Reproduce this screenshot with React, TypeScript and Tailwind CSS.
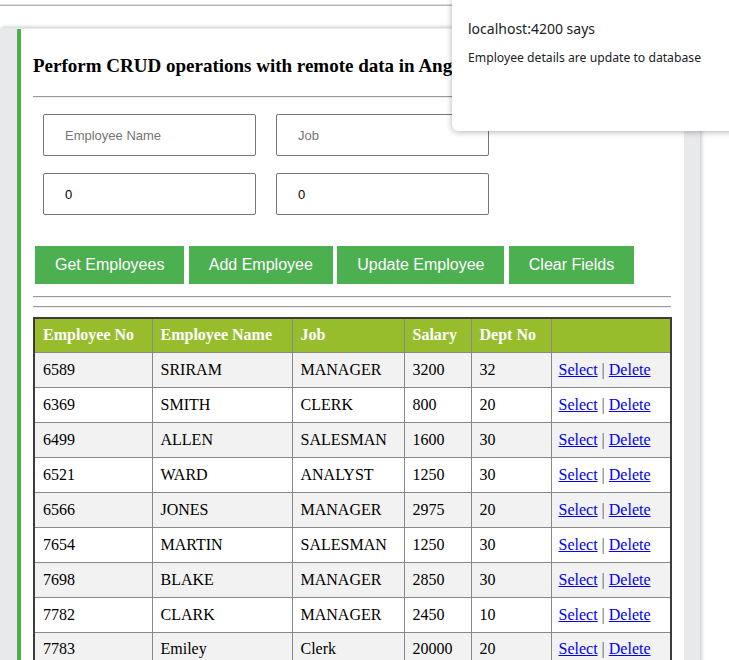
import React from 'react';

const ROWS: string[][] = [
  ['6589', 'SRIRAM', 'MANAGER', '3200', '32'],
  ['6369', 'SMITH', 'CLERK', '800', '20'],
  ['6499', 'ALLEN', 'SALESMAN', '1600', '30'],
  ['6521', 'WARD', 'ANALYST', '1250', '30'],
  ['6566', 'JONES', 'MANAGER', '2975', '20'],
  ['7654', 'MARTIN', 'SALESMAN', '1250', '30'],
  ['7698', 'BLAKE', 'MANAGER', '2850', '30'],
  ['7782', 'CLARK', 'MANAGER', '2450', '10'],
  ['7783', 'Emiley', 'Clerk', '20000', '20'],
];

const HEADERS = ['Employee No', 'Employee Name', 'Job', 'Salary', 'Dept No', ''];
const WIDTHS = ['w-[118px]', 'w-[140px]', 'w-[112px]', 'w-[67px]', 'w-[80px]', 'w-[120px]'];
const BUTTONS = ['Get Employees', 'Add Employee', 'Update Employee', 'Clear Fields'];

function Hr() {
  return <div className="h-[2px] border-t border-[#9a9a9a] border-b border-b-[#eeeeee]" />;
}

export default function App() {
  return (
    <div className="relative min-h-screen bg-white overflow-hidden font-['Liberation_Serif',serif]">
      <div className="h-[4px]" />
      <div className="h-[2px] border-t border-[#dcdcdc] border-b border-b-[#b8b8b8]" />

      {/* Card */}
      <div className="mt-[22px] w-[700px] bg-[#e8e9eb] rounded-tl-[4px] pt-[1px] pl-[17px] pr-[16px] shadow-[0_-1px_4px_rgba(0,0,0,0.15),2px_0_4px_rgba(0,0,0,0.12)]">
        <div className="bg-white border-l-4 border-[#4caf50] pl-[12px] pr-[13px] pt-[26px] pb-8">
          <h3 className="text-[19px] leading-[22px] font-bold text-black whitespace-nowrap">
            Perform CRUD operations with remote data in Angular
          </h3>
          <div className="mt-[19px]"><Hr /></div>

          {/* Form */}
          <div className="mt-[16px] pl-[10px] grid grid-cols-[213px_213px] gap-x-[20px] gap-y-[17px] font-['Liberation_Sans',Arial,sans-serif] text-[13px]">
            <input className="h-[42px] border border-[#767676] rounded-[2px] pl-[21px] outline-none placeholder:text-[#757575]" placeholder="Employee Name" />
            <input className="h-[42px] border border-[#767676] rounded-[2px] pl-[21px] outline-none placeholder:text-[#757575]" placeholder="Job" />
            <input className="h-[42px] border border-[#767676] rounded-[2px] pl-[21px] outline-none text-black" defaultValue="0" />
            <input className="h-[42px] border border-[#767676] rounded-[2px] pl-[21px] outline-none text-black" defaultValue="0" />
          </div>

          {/* Buttons */}
          <div className="mt-[31px] ml-[2px] flex gap-[4.4px] font-['Liberation_Sans',Arial,sans-serif]">
            {BUTTONS.map(b => (
              <button key={b} className="h-[38px] px-[20px] bg-[#4caf50] text-white text-[16px] whitespace-nowrap">
                {b}
              </button>
            ))}
          </div>

          <div className="mt-[12px]"><Hr /></div>
          <div className="mt-[8px]"><Hr /></div>

          {/* Table */}
          <table className="mt-[9px] w-[637px] table-fixed border-collapse border-2 border-[#3c3c3c] text-[16px] text-black">
            <colgroup>
              {WIDTHS.map((w, i) => <col key={i} className={w} />)}
            </colgroup>
            <thead>
              <tr className="bg-[#97bd2c]">
                {HEADERS.map((h, i) => (
                  <th key={i} className="h-[34px] px-[8px] text-left font-bold text-[16px] text-white border border-[#888] whitespace-nowrap">
                    {h}
                  </th>
                ))}
              </tr>
            </thead>
            <tbody>
              {ROWS.map((r, i) => (
                <tr key={i} className={i % 2 === 0 ? 'bg-[#f2f2f2]' : 'bg-white'}>
                  {r.map((c, j) => (
                    <td key={j} className="h-[35px] px-[8px] border border-[#888] whitespace-nowrap">{c}</td>
                  ))}
                  <td className="h-[35px] px-[7px] border border-[#888] whitespace-nowrap">
                    <a href="#" className="text-[#0000ee] underline">Select</a>
                    <span className="text-[#555]"> | </span>
                    <a href="#" className="text-[#0000ee] underline">Delete</a>
                  </td>
                </tr>
              ))}
            </tbody>
          </table>
        </div>
      </div>

      {/* Alert dialog */}
      <div className="absolute top-0 left-[452px] w-[300px] h-[131px] bg-white rounded-bl-[6px] shadow-[0_1px_6px_rgba(0,0,0,0.3)] pl-[16px] pt-[20px] text-[#202124] font-['Noto_Sans',sans-serif]">
        <div className="text-[14px] leading-[18px]">localhost:4200 says</div>
        <div className="mt-[12px] text-[12.2px] leading-[16px]">Employee details are update to database</div>
      </div>
    </div>
  );
}
